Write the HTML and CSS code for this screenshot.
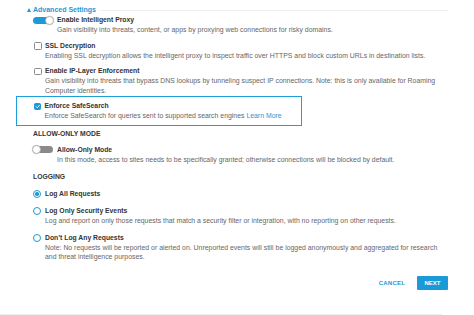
FILE: index.html
```html
<!DOCTYPE html>
<html>
<head>
<meta charset="utf-8">
<link rel="stylesheet" href="styles.css">
</head>
<body>
<div class="page">
  <div class="adv-head">
    <span class="tri"></span>
    <span class="adv-title">Advanced Settings</span>
    <span class="rule"></span>
  </div>

  <div class="opt opt-t first">
    <span class="toggle on"><span class="knob"></span></span>
    <div class="txt">
      <div class="lbl">Enable Intelligent Proxy</div>
      <div class="desc">Gain visibility into threats, content, or apps by proxying web connections for risky domains.</div>
    </div>
  </div>

  <div class="opt opt-c">
    <span class="cbox"></span>
    <div class="txt">
      <div class="lbl">SSL Decryption</div>
      <div class="desc">Enabling SSL decryption allows the intelligent proxy to inspect traffic over HTTPS and block custom URLs in destination lists.</div>
    </div>
  </div>

  <div class="opt opt-c">
    <span class="cbox"></span>
    <div class="txt">
      <div class="lbl">Enable IP-Layer Enforcement</div>
      <div class="desc">Gain visibility into threats that bypass DNS lookups by tunneling suspect IP connections. Note: this is only available for Roaming Computer identities.</div>
    </div>
  </div>

  <div class="hl">
    <div class="opt opt-c">
      <span class="cbox checked">
        <svg viewBox="0 0 8 8" width="8" height="8"><path d="M1.6 4.1 L3.3 5.8 L6.5 2.2" fill="none" stroke="#fff" stroke-width="1.3" stroke-linecap="round" stroke-linejoin="round"/></svg>
      </span>
      <div class="txt">
        <div class="lbl">Enforce SafeSearch</div>
        <div class="desc">Enforce SafeSearch for queries sent to supported search engines <a class="link">Learn More</a></div>
      </div>
    </div>
  </div>

  <div class="sec sec-allow">ALLOW-ONLY MODE</div>

  <div class="opt opt-t allow">
    <span class="toggle off"><span class="knob"></span></span>
    <div class="txt">
      <div class="lbl">Allow-Only Mode</div>
      <div class="desc">In this mode, access to sites needs to be specifically granted; otherwise connections will be blocked by default.</div>
    </div>
  </div>

  <div class="sec sec-log">LOGGING</div>

  <div class="opt opt-r">
    <span class="radio sel"></span>
    <div class="txt"><div class="lbl">Log All Requests</div></div>
  </div>

  <div class="opt opt-r">
    <span class="radio"></span>
    <div class="txt">
      <div class="lbl">Log Only Security Events</div>
      <div class="desc">Log and report on only those requests that match a security filter or integration, with no reporting on other requests.</div>
    </div>
  </div>

  <div class="opt opt-r">
    <span class="radio"></span>
    <div class="txt">
      <div class="lbl">Don’t Log Any Requests</div>
      <div class="desc">Note: No requests will be reported or alerted on. Unreported events will still be logged anonymously and aggregated for research and threat intelligence purposes.</div>
    </div>
  </div>

  <div class="actions">
    <span class="cancel">CANCEL</span>
    <span class="next">NEXT</span>
  </div>

  <div class="foot-line"></div>
</div>
</body>
</html>
```

FILE: styles.css
```css
html, body {
  margin: 0;
  padding: 0;
  background: #fff;
}

body {
  font-family: "Liberation Sans", Arial, sans-serif;
  color: #444;
  width: 474px;
  height: 315px;
  overflow: hidden;
}

.page {
  padding: 5px 26px 0 0;
}

.adv-head {
  display: flex;
  align-items: center;
  height: 10px;
  padding-left: 27px;
}

.tri {
  width: 0;
  height: 0;
  border-left: 2.5px solid transparent;
  border-right: 2.5px solid transparent;
  border-bottom: 4px solid #1a9ad6;
  margin-right: 2px;
}

.adv-title {
  font-size: 7px;
  font-weight: bold;
  color: #1a9ad6;
  line-height: 10px;
}

.rule {
  flex: 1;
  height: 1px;
  background: #efefef;
  margin-left: 4px;
}

.opt {
  display: flex;
  align-items: flex-start;
  margin-top: 6px;
}

.opt.first {
  margin-top: 0;
}

.opt-t {
  padding-left: 33px;
}

.opt-c {
  padding-left: 34px;
}

.opt-r {
  padding-left: 33px;
  margin-top: 7px;
}

.lbl {
  font-size: 6.8px;
  font-weight: bold;
  color: #333;
  line-height: 10px;
  height: 10px;
}

.desc {
  font-size: 6.9px;
  color: #666;
  line-height: 9.5px;
}

.link {
  color: #1a9ad6;
}

/* toggles */
.toggle {
  position: relative;
  flex: none;
  width: 21px;
  height: 10px;
  margin-right: 3px;
}

.toggle::before {
  content: "";
  position: absolute;
  left: 0;
  top: 1.5px;
  width: 20px;
  height: 7px;
  border-radius: 4px;
}

.toggle.on::before {
  background: #1a9ad6;
}

.toggle.off::before {
  background: #8a8a8a;
}

.knob {
  position: absolute;
  top: 0.5px;
  box-sizing: border-box;
  width: 9px;
  height: 9px;
  border-radius: 50%;
  background: #fff;
  border: 0.8px solid #b5b5b5;
  box-shadow: 0 0 1px rgba(0,0,0,0.25);
}

.toggle.on .knob {
  left: 12px;
}

.toggle.off .knob {
  left: -1px;
}

/* checkbox */
.cbox {
  flex: none;
  box-sizing: border-box;
  width: 7.5px;
  height: 7.5px;
  margin-top: 1.5px;
  margin-right: 3.5px;
  border: 1px solid #8a8a8a;
  border-radius: 1.5px;
  background: #fff;
  display: flex;
  align-items: center;
  justify-content: center;
}

.cbox.checked {
  background: #1a9ad6;
  border-color: #1a9ad6;
}

.cbox svg {
  width: 7px;
  height: 7px;
}

/* radio */
.radio {
  flex: none;
  box-sizing: border-box;
  width: 8px;
  height: 8px;
  margin-top: 1px;
  margin-right: 4px;
  border: 1px solid #1a9ad6;
  border-radius: 50%;
  background: #fff;
  position: relative;
}

.radio.sel::after {
  content: "";
  position: absolute;
  left: 1.3px;
  top: 1.3px;
  width: 3.4px;
  height: 3.4px;
  border-radius: 50%;
  background: #1a9ad6;
}

/* highlighted box */
.hl {
  margin-left: 16px;
  margin-top: 1px;
  width: fit-content;
  border: 1.5px solid #1ba0d8;
  padding: 4px 19px 4px 0;
}

.hl .opt {
  margin-top: 0;
  padding-left: 16.5px;
}

.sec {
  font-size: 6.8px;
  font-weight: bold;
  color: #333;
  line-height: 10px;
  padding-left: 33px;
}

.sec-allow {
  margin-top: 3px;
}

.allow {
  margin-top: 6px;
}

.sec-log {
  margin-top: 8px;
}

.actions {
  display: flex;
  justify-content: flex-end;
  align-items: center;
  margin-top: 14px;
  gap: 12px;
}

.cancel {
  font-size: 6px;
  font-weight: bold;
  color: #1a9ad6;
  letter-spacing: 0.2px;
}

.next {
  display: flex;
  align-items: center;
  justify-content: center;
  width: 31px;
  height: 14px;
  background: #1a9ad6;
  color: #fff;
  font-size: 6px;
  font-weight: bold;
  border-radius: 1px;
}

.foot-line {
  margin-top: 24px;
  height: 1px;
  background: #eeeeee;
  margin-right: 6px;
}
```
